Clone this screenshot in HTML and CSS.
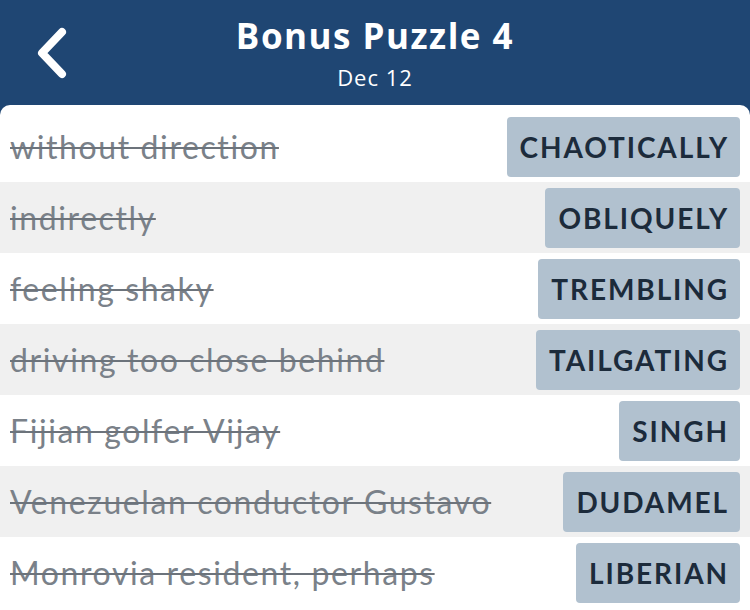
FILE: index.html
```html
<!DOCTYPE html>
<html lang="en">
<head>
  <meta charset="UTF-8">
  <title>Bonus Puzzle 4</title>
  <link rel="stylesheet" href="styles.css">
</head>
<body>
  <div class="header">
    <button class="back" aria-label="Back">
      <svg width="34" height="52" viewBox="0 0 34 52">
        <path d="M28 5 L8 26 L28 47" fill="none" stroke="#fff" stroke-width="8" stroke-linecap="round" stroke-linejoin="round"/>
      </svg>
    </button>
    <h1>Bonus Puzzle 4</h1>
    <p class="date">Dec 12</p>
  </div>

  <div class="panel">
    <div class="row">
      <span class="clue">without direction</span>
      <span class="answer">CHAOTICALLY</span>
    </div>
    <div class="row">
      <span class="clue">indirectly</span>
      <span class="answer">OBLIQUELY</span>
    </div>
    <div class="row">
      <span class="clue">feeling shaky</span>
      <span class="answer">TREMBLING</span>
    </div>
    <div class="row">
      <span class="clue">driving too close behind</span>
      <span class="answer">TAILGATING</span>
    </div>
    <div class="row">
      <span class="clue">Fijian golfer Vijay</span>
      <span class="answer">SINGH</span>
    </div>
    <div class="row">
      <span class="clue">Venezuelan conductor Gustavo</span>
      <span class="answer">DUDAMEL</span>
    </div>
    <div class="row">
      <span class="clue">Monrovia resident, perhaps</span>
      <span class="answer">LIBERIAN</span>
    </div>
  </div>
</body>
</html>
```

FILE: styles.css
```css
body {
  margin: 0;
  font-family: "Lato", "Noto Sans", sans-serif;
  background-color: #1f4673;
  overflow: hidden;
}
.header {
  position: relative;
  height: 105px;
  text-align: center;
  color: #fff;
  font-family: "Open Sans", "Noto Sans", sans-serif;
}
.header h1 {
  margin: 0;
  padding-top: 13px;
  font-size: 35px;
  font-weight: 700;
  line-height: 46px;
  letter-spacing: 1.5px;
}
.date {
  margin: 4px 0 0;
  font-size: 22px;
  line-height: 28px;
  letter-spacing: 1px;
}
.back {
  position: absolute;
  left: 34px;
  top: 27px;
  padding: 0;
  border: none;
  background: none;
}
.panel {
  background-color: #fff;
  border-radius: 10px 10px 0 0;
  padding-top: 6px;
  height: 510px;
}
.row {
  display: flex;
  align-items: center;
  justify-content: space-between;
  height: 71px;
  padding: 0 10px;
}
.row:nth-child(even) {
  background-color: #f0f0f0;
}
.clue {
  font-size: 32px;
  letter-spacing: 1.6px;
  color: #7a8189;
  text-decoration: line-through;
  text-decoration-color: #6c737b;
  text-decoration-thickness: 2px;
}
.answer {
  display: flex;
  align-items: center;
  height: 60px;
  padding: 0 11px 0 13px;
  border-radius: 4px;
  background-color: #b1c1cf;
  color: #1c2b3b;
  font-size: 28px;
  font-weight: 700;
  letter-spacing: 1.9px;
}
```
